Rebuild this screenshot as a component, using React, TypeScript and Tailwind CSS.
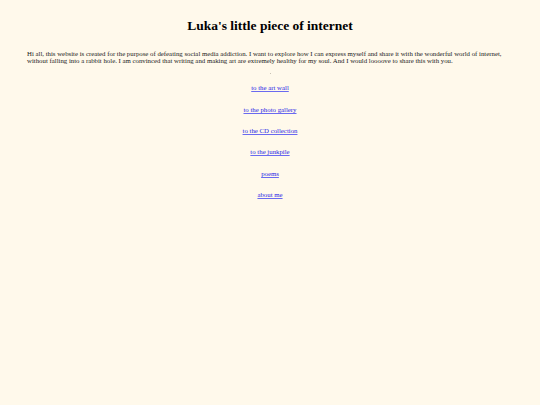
const LINKS = [
  'to the art wall',
  'to the photo gallery',
  'to the CD collection',
  'to the junkpile',
  'poems',
  'about me',
]

export default function App() {
  return (
    <div className="min-h-screen bg-[#fff9eb] text-black font-['Liberation_Serif','Times_New_Roman',serif] px-[27px] pt-[18px]">
      <h1 className="text-center text-[13.5px] leading-[15.5px] font-bold">Luka's little piece of internet</h1>

      <p className="mt-[16px] text-[6.8px] leading-[7.9px] text-[#1a1a1a]">
        Hi all, this website is created for the purpose of defeating social media addiction. I want to explore how I
        can express myself and share it with the wonderful world of internet, without falling into a rabbit hole. I am
        convinced that writing and making art are extremely healthy for my soul. And I would loooove to share this with
        you.
      </p>

      <div className="mx-auto mt-[8px] h-px w-px bg-[#c8c2b4]" />

      <nav className="mt-[10px] flex flex-col items-center gap-[13.5px] text-[6.8px] leading-[7.8px]">
        {LINKS.map((l) => (
          <a
            key={l}
            href="#"
            className="text-[#1f1fe6] underline decoration-[#6a6af0] underline-offset-[1px] [text-decoration-skip-ink:none]"
          >
            {l}
          </a>
        ))}
      </nav>
    </div>
  )
}
